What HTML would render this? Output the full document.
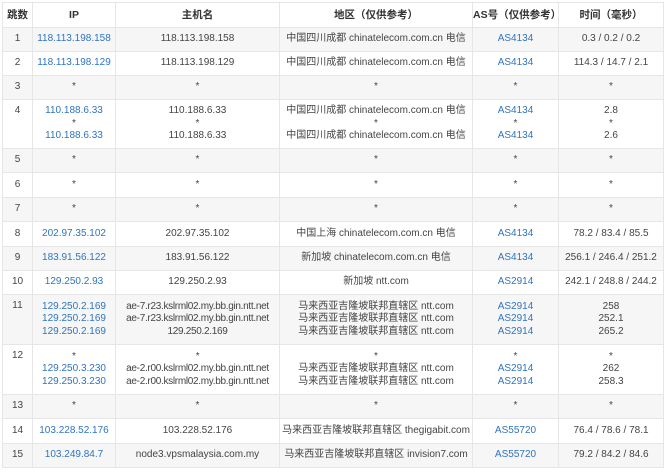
<!DOCTYPE html>
<html><head><meta charset="utf-8"><style>
*{margin:0;padding:0;box-sizing:border-box}
body{width:665px;height:472px;background:#fff;font-family:"Liberation Sans","Noto Sans CJK SC",sans-serif;font-size:10px;color:#444}
table{position:absolute;left:2px;top:2px;width:661px;border-collapse:collapse;table-layout:fixed}
td,th{border:1px solid #e6e6e6;text-align:center;vertical-align:middle;line-height:12.5px;padding:0;white-space:nowrap;overflow:hidden}
th{font-weight:bold;height:25px;background:#fff;font-size:10.5px;color:#333}
tr.o td{background:#f6f6f6}
td.t{vertical-align:top;padding-top:5px}
a{color:#2f74c0;text-decoration:none}
td.h{letter-spacing:-0.3px}
</style></head><body>
<table>
<colgroup><col style="width:30px"><col style="width:83px"><col style="width:164px"><col style="width:193px"><col style="width:86px"><col style="width:105px"></colgroup>
<tr><th>跳数</th><th>IP</th><th>主机名</th><th>地区（仅供参考）</th><th>AS号（仅供参考）</th><th>时间（毫秒）</th></tr>
<tr class="o" style="height:24px"><td>1</td><td><a>118.113.198.158</a></td><td>118.113.198.158</td><td>中国四川成都 chinatelecom.com.cn 电信</td><td><a>AS4134</a></td><td>0.3 / 0.2 / 0.2</td></tr>
<tr style="height:24px"><td>2</td><td><a>118.113.198.129</a></td><td>118.113.198.129</td><td>中国四川成都 chinatelecom.com.cn 电信</td><td><a>AS4134</a></td><td>114.3 / 14.7 / 2.1</td></tr>
<tr class="o" style="height:24px"><td>3</td><td>*</td><td>*</td><td>*</td><td>*</td><td>*</td></tr>
<tr style="height:49px"><td class="t">4</td><td><a>110.188.6.33</a><br>*<br><a>110.188.6.33</a></td><td>110.188.6.33<br>*<br>110.188.6.33</td><td>中国四川成都 chinatelecom.com.cn 电信<br>*<br>中国四川成都 chinatelecom.com.cn 电信</td><td><a>AS4134</a><br>*<br><a>AS4134</a></td><td>2.8<br>*<br>2.6</td></tr>
<tr class="o" style="height:24px"><td>5</td><td>*</td><td>*</td><td>*</td><td>*</td><td>*</td></tr>
<tr style="height:25px"><td>6</td><td>*</td><td>*</td><td>*</td><td>*</td><td>*</td></tr>
<tr class="o" style="height:24px"><td>7</td><td>*</td><td>*</td><td>*</td><td>*</td><td>*</td></tr>
<tr style="height:25px"><td>8</td><td><a>202.97.35.102</a></td><td>202.97.35.102</td><td>中国上海 chinatelecom.com.cn 电信</td><td><a>AS4134</a></td><td>78.2 / 83.4 / 85.5</td></tr>
<tr class="o" style="height:24px"><td>9</td><td><a>183.91.56.122</a></td><td>183.91.56.122</td><td>新加坡 chinatelecom.com.cn 电信</td><td><a>AS4134</a></td><td>256.1 / 246.4 / 251.2</td></tr>
<tr style="height:24px"><td>10</td><td><a>129.250.2.93</a></td><td>129.250.2.93</td><td>新加坡 ntt.com</td><td><a>AS2914</a></td><td>242.1 / 248.8 / 244.2</td></tr>
<tr class="o" style="height:50px"><td class="t">11</td><td><a>129.250.2.169</a><br><a>129.250.2.169</a><br><a>129.250.2.169</a></td><td class="h">ae-7.r23.kslrml02.my.bb.gin.ntt.net<br>ae-7.r23.kslrml02.my.bb.gin.ntt.net<br>129.250.2.169</td><td>马来西亚吉隆坡联邦直辖区 ntt.com<br>马来西亚吉隆坡联邦直辖区 ntt.com<br>马来西亚吉隆坡联邦直辖区 ntt.com</td><td><a>AS2914</a><br><a>AS2914</a><br><a>AS2914</a></td><td>258<br>252.1<br>265.2</td></tr>
<tr style="height:50px"><td class="t">12</td><td>*<br><a>129.250.3.230</a><br><a>129.250.3.230</a></td><td class="h">*<br>ae-2.r00.kslrml02.my.bb.gin.ntt.net<br>ae-2.r00.kslrml02.my.bb.gin.ntt.net</td><td>*<br>马来西亚吉隆坡联邦直辖区 ntt.com<br>马来西亚吉隆坡联邦直辖区 ntt.com</td><td>*<br><a>AS2914</a><br><a>AS2914</a></td><td>*<br>262<br>258.3</td></tr>
<tr class="o" style="height:24px"><td>13</td><td>*</td><td>*</td><td>*</td><td>*</td><td>*</td></tr>
<tr style="height:25px"><td>14</td><td><a>103.228.52.176</a></td><td>103.228.52.176</td><td>马来西亚吉隆坡联邦直辖区 thegigabit.com</td><td><a>AS55720</a></td><td>76.4 / 78.6 / 78.1</td></tr>
<tr class="o" style="height:24px"><td>15</td><td><a>103.249.84.7</a></td><td>node3.vpsmalaysia.com.my</td><td>马来西亚吉隆坡联邦直辖区 invision7.com</td><td><a>AS55720</a></td><td>79.2 / 84.2 / 84.6</td></tr>
</table>
</body></html>
